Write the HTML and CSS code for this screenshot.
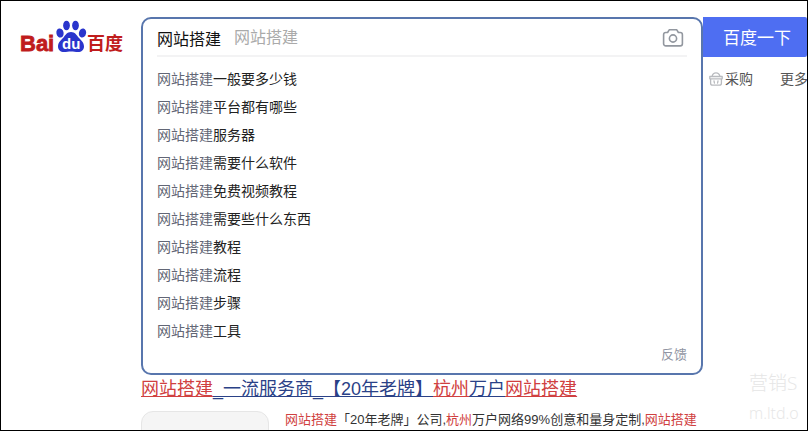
FILE: index.html
```
<!DOCTYPE html>
<html lang="zh-CN">

<head>
	<meta charset="utf-8">
	<title>网站搭建_百度搜索</title>
	<link rel="stylesheet" href="styles.css">
</head>

<body>
	<div class="page">
		<a class="logo" href="#" aria-label="百度首页">
			<svg width="110" height="42" viewBox="-3 -2 110 42">
				<g fill="#2a35cc">
					<ellipse cx="39" cy="12" rx="3.600" ry="4.600" transform="rotate(-12 39 12)" />
					<ellipse cx="45.500" cy="4.500" rx="3.400" ry="4.800" />
					<ellipse cx="54.500" cy="4.500" rx="3.400" ry="4.800" />
					<ellipse cx="61.500" cy="12" rx="3.600" ry="4.600" transform="rotate(14 61.500 12)" />
					<path d="M50 11c-4 0-5.500 3-7.500 5.500-2 2.300-5.500 4.500-5.500 9 0 3.500 2.500 5.500 6 5.500 2.500 0 4.500-.6 7-.6s4.500.6 7 .6c3.500 0 6-2 6-5.500 0-4.500-3.500-6.700-5.500-9C55.500 14 54 11 50 11z" />
				</g>
				<g font-family="Liberation Sans, sans-serif" font-weight="bold">
					<text x="-1" y="30" font-size="22" fill="#c01c1c" stroke="#c01c1c" stroke-width=".8">Bai</text>
					<text x="41" y="28" font-size="15" fill="#fff">du</text>
				</g>
				<text x="66" y="29" font-size="18" font-weight="bold" font-family="Noto Sans CJK SC, sans-serif" fill="#c01c1c">百度</text>
			</svg>
		</a>

		<main class="main">
			<form class="search-box">
				<div class="search-row">
					<input class="search-input" type="text" value="网站搭建" aria-label="搜索">
					<span class="search-hint">网站搭建</span>
					<button class="camera" type="button" aria-label="按图片搜索">
						<svg width="22" height="20" viewBox="0 0 22 20" fill="none" stroke="#92979f" stroke-width="1.6" stroke-linejoin="round">
							<path d="M7.200 1.800h7.600l1.600 2.700h1.800a2.200 2.200 0 0 1 2.200 2.200v9a2.200 2.200 0 0 1-2.200 2.200H3.800a2.200 2.200 0 0 1-2.200-2.200v-9a2.200 2.200 0 0 1 2.200-2.200h1.800z" />
							<circle cx="11" cy="10.500" r="3.600" />
						</svg>
					</button>
				</div>
				<ul class="suggest">
					<li><a href="#"><span>网站搭建</span>一般要多少钱</a></li>
					<li><a href="#"><span>网站搭建</span>平台都有哪些</a></li>
					<li><a href="#"><span>网站搭建</span>服务器</a></li>
					<li><a href="#"><span>网站搭建</span>需要什么软件</a></li>
					<li><a href="#"><span>网站搭建</span>免费视频教程</a></li>
					<li><a href="#"><span>网站搭建</span>需要些什么东西</a></li>
					<li><a href="#"><span>网站搭建</span>教程</a></li>
					<li><a href="#"><span>网站搭建</span>流程</a></li>
					<li><a href="#"><span>网站搭建</span>步骤</a></li>
					<li><a href="#"><span>网站搭建</span>工具</a></li>
				</ul>
				<a class="feedback" href="#">反馈</a>
			</form>

			<article class="result">
				<a class="result-title" href="#"><em>网站搭建</em>_一流服务商_【20年老牌】<em>杭州</em>万户<em>网站搭建</em></a>
				<div class="result-body">
					<div class="thumb"></div>
					<p><em>网站搭建</em>「20年老牌」公司,<em>杭州</em>万户网络99%创意和量身定制,<em>网站搭建</em></p>
				</div>
			</article>
		</main>

		<aside class="side">
			<button class="submit" type="button">百度一下</button>
			<nav class="tabs">
				<a href="#">
					<svg width="14" height="14" viewBox="0 0 14 14" fill="none" stroke="#b9bbbf" stroke-width="1.3" stroke-linecap="round" stroke-linejoin="round">
						<path d="M.8 4.500h12.400v2.300H.8zM1.600 6.800v4.400q0 2 2 2h6.800q2 0 2-2V6.800M3 4.300C3.600 1.800 5 .8 7 .8s3.400 1 4 3.500M5 8.800l.4 2.200M9 8.800l-.4 2.200" />
					</svg>
					采购
				</a>
				<a href="#">更多</a>
			</nav>
		</aside>

		<div class="watermark">
			<span>营销S</span>
			<small>m.ltd.o</small>
		</div>
	</div>
</body>

</html>
```
FILE: styles.css
```
* {
	box-sizing: border-box;
}

body {
	margin: 0;
	background: #fff;
	font-family: "Liberation Sans", "Noto Sans CJK SC", sans-serif;
	font-size: 14px;
	color: #222;
}

a {
	color: inherit;
	text-decoration: none;
}

em {
	font-style: normal;
	color: #d04040;
}

button {
	padding: 0;
	border: 0;
	background: none;
	font-family: inherit;
}

.page {
	position: relative;
	display: grid;
	grid-template-columns: 140px minmax(0, 1fr) 104px;
	height: calc(100vh - 1px);
	margin-right: 1px;
	padding-top: 16px;
	border: 1px solid #000;
	overflow: hidden;
}

.logo {
	padding: 2px 0 0 17px;
}

.search-box {
	padding: 0 14px 8px;
	border: 2px solid #5876ad;
	border-radius: 10px;
}

.search-row {
	display: flex;
	align-items: center;
	height: 38px;
	padding-top: 2px;
	border-bottom: 2px solid #f3f3f4;
}

.search-input {
	width: 64px;
	height: 24px;
	padding: 0;
	border: 0;
	outline: none;
	font-family: inherit;
	font-size: 16px;
	color: #111;
}

.search-hint {
	flex: 1;
	margin-left: 13px;
	font-size: 16px;
	line-height: 24px;
	color: #aaa;
}

.camera {
	height: 20px;
	margin-right: 3px;
}

.camera svg,
.logo svg,
.tabs svg {
	display: block;
}

.suggest {
	margin: 0;
	padding: 8px 0 0;
	list-style: none;
	line-height: 28px;
}

.suggest span {
	color: #626675;
}

.feedback {
	display: block;
	font-size: 13px;
	line-height: 20px;
	text-align: right;
	color: #9195a3;
}

.result-title {
	display: block;
	font-size: 18px;
	line-height: 28px;
	white-space: nowrap;
	color: #2a4187;
	text-decoration: underline;
}

.result-title em {
	text-decoration: underline;
}

.result-body {
	display: flex;
	gap: 16px;
	margin-top: 8px;
}

.result-body p {
	margin: 0;
	font-size: 13px;
	line-height: 18px;
	white-space: nowrap;
	color: #333;
}

.thumb {
	flex: none;
	width: 128px;
	height: 85px;
	border: 1px solid #e6e6e6;
	border-radius: 12px;
	background: #f5f5f5;
}

.submit {
	width: 100%;
	height: 40px;
	padding: 0 0 2px 4px;
	border-radius: 0 2px 2px 0;
	background: #4e6ef2;
	font-size: 17px;
	color: #fff;
}

.tabs {
	display: flex;
	gap: 27px;
	margin: 8px 0 0 6px;
	line-height: 28px;
	white-space: nowrap;
	color: #555;
}

.tabs a {
	display: flex;
	align-items: center;
	gap: 2px;
}

.watermark {
	position: absolute;
	right: 4px;
	bottom: 2px;
	width: 54px;
	font-family: "Open Sans", "Noto Sans CJK SC", sans-serif;
	font-size: 19px;
	font-weight: 300;
	line-height: 30px;
	white-space: nowrap;
	color: #e6e6e6;
}

.watermark span,
.watermark small {
	display: block;
}

.watermark small {
	font-size: 16px;
}
```
